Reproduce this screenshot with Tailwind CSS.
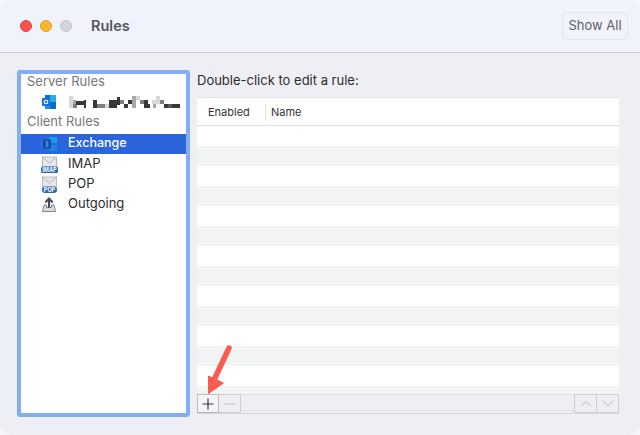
<!DOCTYPE html>
<html lang="en">
  <head>
    <meta charset="UTF-8" />
    <title>Rules</title>
    <script src="https://cdn.jsdelivr.net/npm/@tailwindcss/browser@4"></script>
  </head>
  <body class="bg-[#f7f7fa] font-['Inter',sans-serif]">
    <div class="relative w-[640px] h-[435px] rounded-[10px] overflow-hidden bg-[#eeeff5] flex flex-col">

      <!-- title bar -->
      <div class="h-[53px] shrink-0 bg-[#f0f3fb] border-b border-[#c9c9cd] flex items-center pl-5 pr-[12px]">
        <span class="w-3 h-3 rounded-full bg-[#fb5150] border border-[#e0443e]"></span>
        <span class="w-3 h-3 rounded-full bg-[#fdb52d] border border-[#dea123] ml-2"></span>
        <span class="w-3 h-3 rounded-full bg-[#d3d5dc] border border-[#c3c5cc] ml-2"></span>
        <span class="ml-[19px] -mt-px text-[14.5px] font-semibold text-[#55555b]">Rules</span>
        <span class="ml-auto h-[28px] w-[66px] rounded-[5px] border border-[#e3e6ee] flex items-center justify-center text-[13px] text-[#5f5f66]">Show All</span>
      </div>

      <!-- body -->
      <div class="flex flex-1 pl-[17px] pr-[21px] pt-[17px] pb-[18px] gap-[7px]">

        <!-- source list -->
        <div class="w-[173px] h-[347px] shrink-0 bg-white border-4 border-[#83aef5] rounded-[3px] text-[13px] text-[#2c2c2e]">
          <div class="h-[18px] pb-[3px] pl-[6px] flex items-center text-[#77777b]">Server Rules</div>
          <div class="h-[20px] flex items-center pl-[21px]">
            <svg width="14" height="14" viewBox="0 0 14 14">
              <rect x="3" y="0" width="11" height="14" fill="#0f6cc4" />
              <rect x="8" y="0" width="6" height="7" fill="#29a8ea" />
              <rect x="3" y="7" width="5" height="7" fill="#1490df" />
              <rect x="0" y="3" width="8" height="8" rx="1" fill="#1273d4" />
              <circle cx="4" cy="7" r="1.800" fill="none" stroke="#fff" stroke-width="1.100" />
            </svg>
            <svg class="ml-[13px]" width="112" height="12" viewBox="69 96 112 12">
              <g fill="#d8d8d8">
                <rect x="69" y="96" width="4" height="12" />
                <rect x="105" y="104" width="4" height="4" />
                <rect x="136" y="96" width="4" height="4" />
                <rect x="152" y="100" width="4" height="4" />
                <rect x="156" y="96" width="4" height="8" />
              </g>
              <g fill="#a8a8a8">
                <rect x="73" y="100" width="3" height="4" />
                <rect x="132" y="96" width="4" height="12" />
                <rect x="153" y="104" width="3" height="4" />
              </g>
              <g fill="#808080">
                <rect x="73" y="104" width="4" height="4" />
                <rect x="97" y="104" width="8" height="4" />
                <rect x="120" y="100" width="4" height="4" />
                <rect x="140" y="100" width="4" height="4" />
                <rect x="160" y="100" width="4" height="4" />
              </g>
              <g fill="#383838">
                <rect x="76" y="101" width="8" height="4" />
                <rect x="84" y="100" width="2" height="8" />
                <rect x="93" y="100" width="4" height="8" />
                <rect x="109" y="100" width="8" height="8" />
                <rect x="117" y="97" width="3" height="8" />
                <rect x="124" y="104" width="4" height="4" />
                <rect x="128" y="100" width="4" height="4" />
                <rect x="144" y="100" width="4" height="8" />
                <rect x="148" y="104" width="2" height="4" />
                <rect x="164" y="104" width="4" height="4" />
                <rect x="172" y="104" width="8" height="4" />
              </g>
              <rect x="168" y="104" width="4" height="4" fill="#5a5a5a" />
            </svg>
          </div>
          <div class="h-[22px] pb-[3px] pl-[6px] flex items-center text-[#77777b]">Client Rules</div>
          <div class="h-[20px] flex items-center pl-[22px] bg-[#2b65de] text-white font-medium">
            <svg width="14" height="14" viewBox="0 0 14 14">
              <rect x="6" y="0" width="8" height="6" fill="#1f9cf0" />
              <rect x="6" y="8" width="8" height="6" fill="#1a86dc" />
              <rect x="0" y="2.500" width="8" height="9" rx="1" fill="#0c4fa8" />
              <path d="M2.800 5h2.500M2.800 7h2.500M2.800 9h2.500" stroke="#cfe3fb" stroke-width="0.700" />
            </svg>
            <span class="ml-[11px] -mt-px text-[12.5px]">Exchange</span>
          </div>
          <div class="h-[20px] flex items-center pl-[20px]">
            <svg width="17" height="17" viewBox="0 0 17 17">
              <rect x="1.500" y="1" width="14" height="10" fill="#e4e6ea" stroke="#a7acb3" stroke-width="0.800" />
              <path d="M1.500 1l7 6 7-6" fill="none" stroke="#a7acb3" stroke-width="0.800" />
              <rect x="0" y="10.500" width="17" height="6.500" rx="1.500" fill="#2a6bb5" />
              <text x="8.500" y="15.800" text-anchor="middle" font-family="Inter" font-size="5.500" font-weight="700" fill="#fff">IMAP</text>
            </svg>
            <span class="ml-[10px] -mt-px">IMAP</span>
          </div>
          <div class="h-[20px] flex items-center pl-[20px]">
            <svg width="17" height="17" viewBox="0 0 17 17">
              <rect x="1.500" y="1" width="14" height="10" fill="#e4e6ea" stroke="#a7acb3" stroke-width="0.800" />
              <path d="M1.500 1l7 6 7-6" fill="none" stroke="#a7acb3" stroke-width="0.800" />
              <rect x="1" y="10.500" width="15" height="6.500" rx="3" fill="#2a6bb5" />
              <text x="8.500" y="15.800" text-anchor="middle" font-family="Inter" font-size="5.500" font-weight="700" fill="#fff">POP</text>
            </svg>
            <span class="ml-[10px] -mt-px">POP</span>
          </div>
          <div class="h-[20px] flex items-center pl-[21px]">
            <svg width="14" height="15" viewBox="0 0 14 15">
              <path d="M2 8L.5 14.500h13L12 8h-2.500v2.500h-5V8Z" fill="#d9dce1" stroke="#70767d" stroke-width="0.900" />
              <path d="M7 10.500V2.500M3.300 5.500L7 1.500l3.700 4" fill="none" stroke="#3f4a55" stroke-width="2" />
            </svg>
            <span class="ml-[12px] -mt-px">Outgoing</span>
          </div>
        </div>

        <!-- rules table -->
        <div class="flex-1 flex flex-col">
          <div class="h-[22px] mb-[5px] flex items-center text-[13px] text-[#2c2c2e]">Double-click to edit a rule:</div>
          <div class="h-[297px] bg-white border-t border-[#e3e3e6] flex flex-col overflow-hidden">
            <div class="h-[28px] shrink-0 pt-px border-b border-[#e3e3e6] flex items-center text-[11px] text-[#333336]">
              <span class="w-[69px] pl-[11px] border-r border-[#e3e3e6] leading-[17px]">Enabled</span>
              <span class="pl-[5px]">Name</span>
            </div>
            <div class="h-[20px] shrink-0"></div>
            <div class="h-[20px] shrink-0 bg-[#f3f4f4]"></div>
            <div class="h-[20px] shrink-0"></div>
            <div class="h-[20px] shrink-0 bg-[#f3f4f4]"></div>
            <div class="h-[20px] shrink-0"></div>
            <div class="h-[20px] shrink-0 bg-[#f3f4f4]"></div>
            <div class="h-[20px] shrink-0"></div>
            <div class="h-[20px] shrink-0 bg-[#f3f4f4]"></div>
            <div class="h-[20px] shrink-0"></div>
            <div class="h-[20px] shrink-0 bg-[#f3f4f4]"></div>
            <div class="h-[20px] shrink-0"></div>
            <div class="h-[20px] shrink-0 bg-[#f3f4f4]"></div>
            <div class="h-[20px] shrink-0"></div>
            <div class="h-[20px] shrink-0 bg-[#f3f4f4]"></div>
          </div>
          <!-- add / remove toolbar -->
          <div class="h-[20px] flex bg-[#eeeff5] border-b border-[#d9d9dc]">
            <span class="w-[22px] border border-[#bdbdc0] border-b-[#b5b5b8] bg-[#f4f4f6] flex items-center justify-center">
              <svg width="12" height="12" viewBox="0 0 12 12"><path d="M6 .5v11M.5 6h11" stroke="#38383a" stroke-width="1.200" /></svg>
            </span>
            <span class="w-[22px] border-y border-r border-[#cfcfd2] flex items-center justify-center">
              <svg width="12" height="12" viewBox="0 0 12 12"><path d="M.5 6h11" stroke="#bcbcc0" stroke-width="1.200" /></svg>
            </span>
            <span class="flex-1 border-t border-b mb-[2px] border-[#e0e0e3]"></span>
            <span class="w-[23px] border border-[#cfcfd2] flex items-center justify-center">
              <svg width="12" height="7" viewBox="0 0 12 7"><path d="M1 6l5-4.500L11 6" fill="none" stroke="#cfcfd2" stroke-width="1.200" /></svg>
            </span>
            <span class="w-[22px] border-y border-r border-[#cfcfd2] flex items-center justify-center">
              <svg width="12" height="7" viewBox="0 0 12 7"><path d="M1 1l5 4.500L11 1" fill="none" stroke="#cfcfd2" stroke-width="1.200" /></svg>
            </span>
          </div>
        </div>
      </div>

      <!-- red annotation arrow -->
      <svg class="absolute left-[200px] top-[340px]" width="40" height="60" viewBox="0 0 40 60">
        <path d="M29 8L14 40" stroke="#fb5c52" stroke-width="5.500" stroke-linecap="round" fill="none" />
        <path d="M8.500 53.500L8.500 36L23.500 43Z" fill="#fb5c52" stroke="#fb5c52" stroke-width="1" stroke-linejoin="round" />
      </svg>
    </div>
  </body>
</html>
